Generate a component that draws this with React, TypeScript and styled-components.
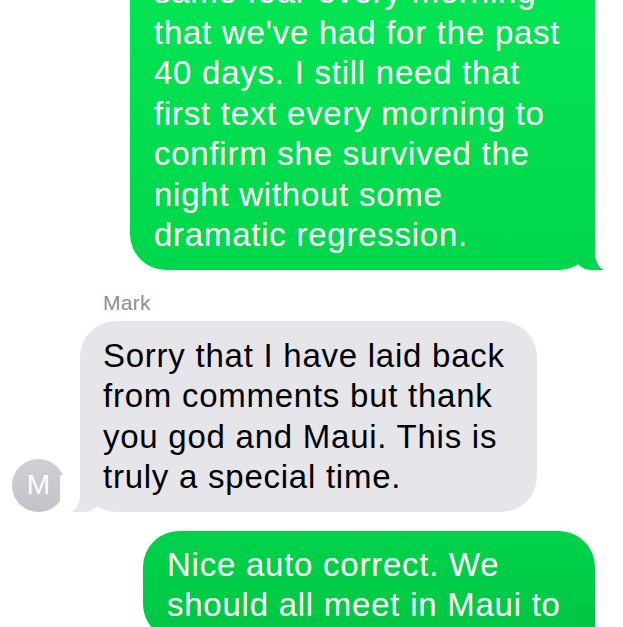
import styled, { createGlobalStyle } from "styled-components";

const GlobalStyle = createGlobalStyle`
  html, body {
    margin: 0;
    padding: 0;
    background: #ffffff;
    overflow: hidden;
  }
  body {
    font-family: "Liberation Sans", Arial, Helvetica, sans-serif;
    -webkit-font-smoothing: antialiased;
  }
`;

const Screen = styled.div`
  width: 623px;
  height: 627px;
  overflow: hidden;
  background: #ffffff;
`;

const Thread = styled.div`
  display: flex;
  flex-direction: column;
  margin-top: -42px;
  padding: 0 28px 0 12px;
`;

const SentRow = styled.div<{ $gap?: number }>`
  display: flex;
  justify-content: flex-end;
  margin-top: ${(p) => p.$gap ?? 0}px;
`;

const Bubble = styled.div<{ $width: number }>`
  position: relative;
  box-sizing: border-box;
  width: ${(p) => p.$width}px;
  border-radius: 36px;
  font-size: 33px;
  line-height: 40.5px;
  letter-spacing: 0.75px;
  white-space: pre-line;
`;

// tail: a coloured block fills the corner, a white block with a rounded corner carves the hook
const SentBubble = styled(Bubble)<{ $from: string; $to: string }>`
  padding: 14px 20px 14px 24px;
  color: #ffffff;
  background: linear-gradient(180deg, ${(p) => p.$from}, ${(p) => p.$to});

  &::before {
    content: "";
    position: absolute;
    bottom: 0;
    right: -11px;
    width: 30px;
    height: 36px;
    background: ${(p) => p.$to};
    border-bottom-left-radius: 16px 12px;
  }
  &::after {
    content: "";
    position: absolute;
    bottom: 0;
    left: 100%;
    width: 20px;
    height: 37px;
    background: #ffffff;
    border-bottom-left-radius: 11px 17px;
  }
`;

const Sender = styled.div`
  margin: 21px 0 0 91px;
  font-size: 21px;
  line-height: 24px;
  letter-spacing: 0.3px;
  color: #8e8e93;
`;

const ReceivedRow = styled.div`
  display: flex;
  align-items: flex-end;
  gap: 15px;
  margin-top: 6px;
`;

const Avatar = styled.div`
  flex: 0 0 53px;
  height: 53px;
  border-radius: 50%;
  background: linear-gradient(180deg, #cfcfd4, #c2c2c8);
  color: #ffffff;
  display: flex;
  align-items: center;
  justify-content: center;
  font-size: 28px;
  font-weight: 400;
`;

const ReceivedBubble = styled(Bubble)`
  padding: 15px 20px 14px 23px;
  color: #000000;
  background: #e5e5ea;

  &::before {
    content: "";
    position: absolute;
    bottom: 0;
    left: -11px;
    width: 30px;
    height: 36px;
    background: #e5e5ea;
    border-bottom-right-radius: 16px 12px;
  }
  &::after {
    content: "";
    position: absolute;
    bottom: 0;
    right: 100%;
    width: 20px;
    height: 37px;
    background: #ffffff;
    border-bottom-right-radius: 11px 17px;
  }
`;

const messages = {
  first:
    "same fear every morning\nthat we've had for the past\n40 days. I still need that\nfirst text every morning to\nconfirm she survived the\nnight without some\ndramatic regression.",
  reply:
    "Sorry that I have laid back\nfrom comments but thank\nyou god and Maui. This is\ntruly a special time.",
  last: "Nice auto correct. We\nshould all meet in Maui to",
};

export default function App() {
  return (
    <Screen>
      <GlobalStyle />
      <Thread>
        <SentRow>
          <SentBubble $width={465} $from="#04e654" $to="#00d64b">
            {messages.first}
          </SentBubble>
        </SentRow>

        <Sender>Mark</Sender>
        <ReceivedRow>
          <Avatar>M</Avatar>
          <ReceivedBubble $width={457}>{messages.reply}</ReceivedBubble>
        </ReceivedRow>

        <SentRow $gap={19}>
          <SentBubble $width={452} $from="#00d24a" $to="#00c644">
            {messages.last}
          </SentBubble>
        </SentRow>
      </Thread>
    </Screen>
  );
}
